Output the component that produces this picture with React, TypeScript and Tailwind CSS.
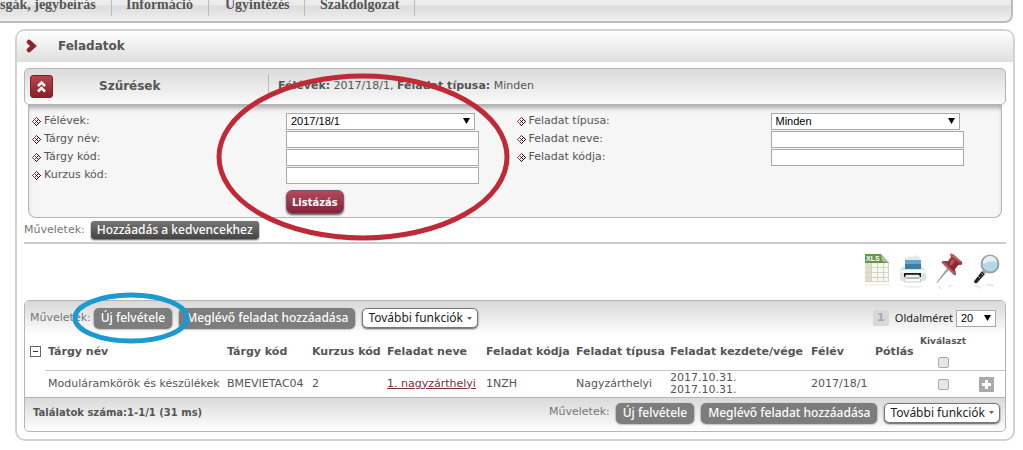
import React, { useState } from 'react';

const NAV_ITEMS = [
  { label: 'sgák, jegybeírás', width: 'w-[112px]' },
  { label: 'Információ', width: 'w-[97px] pl-[14px]' },
  { label: 'Ügyintézés', width: 'w-[96px] pl-[16px]' },
  { label: 'Szakdolgozat', width: 'w-[110px] pl-[15px]' },
];

const TASKS = [
  {
    id: 'task-1',
    subject: 'Moduláramkörök és készülékek',
    code: 'BMEVIETAC04',
    course: '2',
    name: '1. nagyzárthelyi',
    taskCode: '1NZH',
    type: 'Nagyzárthelyi',
    start: '2017.10.31.',
    end: '2017.10.31.',
    term: '2017/18/1',
  },
];

function BulletIcon() {
  return (
    <svg width="9" height="9" viewBox="0 0 9 9" className="shrink-0" aria-hidden="true" shapeRendering="crispEdges">
      <path d="M4 0h1v1h-1zM3 1h1v1h-1zM2 2h1v1h-1zM1 3h1v1h-1zM3 3h1v1h-1zM0 4h1v1h-1zM1 5h1v1h-1zM3 5h1v1h-1zM2 6h1v1h-1z" fill="#7c4650" />
      <path d="M5 1h1v1h-1zM6 2h1v1h-1zM5 3h1v1h-1zM7 3h1v1h-1zM4 4h1v1h-1zM8 4h1v1h-1zM5 5h1v1h-1zM7 5h1v1h-1zM6 6h1v1h-1zM3 7h1v1h-1zM5 7h1v1h-1zM4 8h1v1h-1z" fill="#3d0612" />
      <path d="M4 2h1v1h-1zM2 4h1v1h-1zM6 4h1v1h-1zM4 6h1v1h-1z" fill="#fff" />
    </svg>
  );
}

function XlsIcon() {
  return (
    <svg width="26" height="38" viewBox="0 0 26 38" aria-hidden="true">
      <path d="M1 1h17l7 9v19H1z" fill="#f9f9f4" />
      <path d="M1 10h6v19H1z" fill="#e3dfc6" />
      <path d="M1 14.500h24M1 19.500h24M1 24.500h24M7.500 10v19M13.500 10v19M19.500 10v19M24.500 10v19M1 28.500h24" stroke="#d3d3c6" fill="none" />
      <path d="M1 1h16l8 9H1z" fill="#67964f" />
      <path d="M17 1l1 7 7 2z" fill="#a9c79a" />
      <text x="2" y="8" fontSize="7" fontWeight="bold" fontFamily="Liberation Sans, sans-serif" fill="#fff">XLS</text>
      <path d="M1 31h24v2H1z" fill="#f4f4ec" />
    </svg>
  );
}

function PrinterIcon() {
  return (
    <svg width="28" height="38" viewBox="0 0 28 38" aria-hidden="true">
      <path d="M6 4l3 1 1-2 4 1 2-2 4 2 2 3v7H6z" fill="#dceaf1" />
      <path d="M6 7h16v9H6z" fill="#3b7fa6" />
      <path d="M6 7h16v4H6z" fill="#6aa6c5" />
      <path d="M3 14h3v2h16v-2h2l3 4v8q0 2-2 2H3q-2 0-2-2v-8z" fill="#dfe3e6" />
      <path d="M2 17h25v3H2z" fill="#f6f7f8" />
      <path d="M5 20h17v4H5z" fill="#17191b" />
      <path d="M7 22h13l2 7H5z" fill="#fbfbfb" stroke="#b8bcbf" strokeWidth=".7" />
      <path d="M7 25h13" stroke="#777" />
      <path d="M3 32q11 2 22 0l-2 2q-9 2-18 0z" fill="#efefef" />
    </svg>
  );
}

function PinIcon() {
  return (
    <svg width="28" height="38" viewBox="0 0 28 38" aria-hidden="true">
      <path d="M0 30L11 15l2 2z" fill="#b3b7ba" />
      <path d="M1 30L12 16" stroke="#85898c" strokeWidth=".8" />
      <path d="M14 1q2-1 4 1l8 7q1 2-1 3l-3 0-3 4 1 5q0 2-2 1L6 10q-1-2 1-2l5 0 3-4z" fill="#9c3a40" />
      <path d="M14 1q2-1 4 1l8 7-2 0-9-6zM6 9q1-1 2 0l12 12-2 1z" fill="#b96266" />
      <path d="M16 5l7 6-4 5-3 1-4-5 0-3z" fill="#8a2a31" />
      <path d="M16 6l3 2-4 5-2-2z" fill="#b4565b" />
      <path d="M2 33l4 3M12 34l5-2" stroke="#ededed" strokeWidth="2" />
    </svg>
  );
}

function SearchIcon() {
  return (
    <svg width="28" height="38" viewBox="0 0 28 38" aria-hidden="true">
      <path d="M9 18l3 3-8 9q-2 1-3-1 0-1 1-2z" fill="#242424" />
      <path d="M8 20l2 2M5 23l2 2" stroke="#9a9a9a" />
      <path d="M9 18l2-2 3 3-2 2z" fill="#a8aaac" />
      <circle cx="17" cy="11" r="8.500" fill="#b5d8e8" stroke="#9ba3a7" strokeWidth="2" />
      <path d="M10 11a7 7 0 0 1 14-2q-6-2-14 2z" fill="#e3f1f7" />
      <path d="M2 32l6 3M13 32q4-1 8 1" stroke="#ebebeb" strokeWidth="2" fill="none" />
    </svg>
  );
}

function SelectBox({ id, label, value, className }: { id: string; label?: string; value: string; className: string }) {
  return (
    <div className={`relative ${className}`}>
      <select
        id={id}
        aria-label={label}
        className="block h-[17px] w-full appearance-none border border-[#a9a9a9] bg-white pl-1 font-['Liberation_Sans',sans-serif] text-[11px] leading-[15px] text-black"
      >
        <option>{value}</option>
      </select>
      <svg width="7" height="6" viewBox="0 0 7 6" className="pointer-events-none absolute top-[5px] right-[5px]" aria-hidden="true">
        <path d="M0 0h7L3.500 6z" fill="#000" />
      </svg>
    </div>
  );
}

function FilterRow({ id, label, option }: { id: string; label: string; option?: string }) {
  return (
    <div className="flex h-[18px] items-center">
      <label htmlFor={id} className="flex w-[254px] items-center gap-[3px]">
        <BulletIcon />
        {label}
      </label>
      {option ? (
        <SelectBox id={id} value={option} className="w-[189px]" />
      ) : (
        <input id={id} type="text" className="h-[17px] w-[193px] border border-[#a9a9a9] bg-white px-1" />
      )}
    </div>
  );
}

function OperationButtons() {
  const grey =
    "h-5 rounded-[5px] bg-[#7d7d7d] px-[7px] font-['Noto_Sans',sans-serif] text-[12px] leading-[18px] font-medium text-white shadow-[0_1px_2px_#555]";
  return (
    <div className="flex gap-[7px]">
      <button type="button" className={grey}>Új felvétele</button>
      <button type="button" className={grey}>Meglévő feladat hozzáadása</button>
      <button
        type="button"
        className="flex h-5 items-center gap-1 rounded-[5px] border border-[#777] bg-white px-[5px] font-['Noto_Sans',sans-serif] text-[12px] leading-[18px] text-[#222] shadow-[0_1px_2px_#555]"
      >
        További funkciók
        <svg width="5" height="3" viewBox="0 0 5 3" aria-hidden="true">
          <path d="M0 0h5L2.500 3z" fill="#666" />
        </svg>
      </button>
    </div>
  );
}

export default function App() {
  const [selected, setSelected] = useState<string[]>([]);

  const toggleTask = (id: string) => {
    setSelected(prev => (prev.includes(id) ? prev.filter(item => item !== id) : [...prev, id]));
  };

  const th = 'pl-[3px] text-left font-bold whitespace-nowrap border-b border-[#c4c4c4]';
  const td = 'pl-[3px] whitespace-nowrap';

  return (
    <div className="min-h-screen bg-white font-['DejaVu_Sans',sans-serif] text-[11px] text-[#555]">
      <nav className="mr-[10px] flex h-[23px] rounded-br-[8px] border-r-2 border-b-2 border-[#bcbcbc] bg-linear-to-b from-[#ececec] from-20% via-[#dcdcdc] via-30% to-[#f0f0f0] font-['Liberation_Serif',serif] text-[14px] leading-[10px] font-bold text-[#555]">
        {NAV_ITEMS.map(item => (
          <a key={item.label} href="#" className={`h-4 border-r border-[#bbb] whitespace-nowrap ${item.width}`}>
            {item.label}
          </a>
        ))}
      </nav>

      <main className="mt-[6px] mr-[8px] ml-[15px] rounded-[10px] border-2 border-[#d2d2d2] pb-[7px]">
        <div className="flex h-[31px] items-center rounded-t-[8px] bg-linear-to-b from-white to-[#dedede] pb-px pl-[9px]">
          <svg width="12" height="14" viewBox="0 0 12 14" aria-hidden="true">
            <path d="M3 3l4.500 4-4.500 4" fill="none" stroke="#8e2630" strokeWidth="4.500" strokeLinecap="round" />
          </svg>
          <h1 className="ml-5 text-[12px] font-bold">Feladatok</h1>
        </div>

        <div className="relative mx-[7px] mt-[6px]">
          <div className="flex h-[37px] items-center rounded-[5px] border border-[#b5b5b5] bg-linear-to-b from-[#dadada] to-[#fafafa] pb-px pl-[5px]">
            <button type="button" aria-label="Szűrések" className="flex h-[23px] w-[23px] items-center justify-center rounded-[3px] border border-[#7c1f29] bg-linear-to-b from-[#b8434a] to-[#8a1f2a]">
              <svg width="11" height="13" viewBox="0 0 11 13" aria-hidden="true">
                <path d="M2 6l3.500-3.500L9 6M2 11.500L5.500 8 9 11.500" fill="none" stroke="#fff" strokeWidth="2.500" />
              </svg>
            </button>
            <h2 className="ml-[46px] w-[169px] text-[12px] font-bold">Szűrések</h2>
            <p className="border-l border-[#bbb] py-1 pl-[9px] text-[11px]">
              <b>Félévek:</b> 2017/18/1, <b>Feladat típusa:</b> Minden
            </p>
          </div>

          <form className="mx-1 h-[113px] rounded-b-[8px] border border-t-0 border-[#b5b5b5] bg-[#f6f6f6] pt-[7px] pl-[3px] shadow-[inset_0_5px_5px_-2px_#aaa]">
            <div className="grid grid-cols-2">
              <div>
                <FilterRow id="term" label="Félévek:" option="2017/18/1" />
                <FilterRow id="subject-name" label="Tárgy név:" />
                <FilterRow id="subject-code" label="Tárgy kód:" />
                <FilterRow id="course-code" label="Kurzus kód:" />
              </div>
              <div>
                <FilterRow id="task-type" label="Feladat típusa:" option="Minden" />
                <FilterRow id="task-name" label="Feladat neve:" />
                <FilterRow id="task-code" label="Feladat kódja:" />
              </div>
            </div>
            <button
              type="button"
              className="mt-[6px] ml-[254px] h-6 rounded-[6px] border border-[#6d5a70] bg-linear-to-b from-[#b5485c] to-[#86203a] px-[5px] text-[10px] font-bold text-white shadow-[0_1px_2px_#555]"
            >
              Listázás
            </button>
          </form>

          <svg className="pointer-events-none absolute top-[4px] left-[191px]" width="296" height="170" viewBox="0 0 296 170" aria-hidden="true">
            <ellipse cx="148" cy="85" rx="144" ry="81" fill="none" stroke="#bf2a36" strokeWidth="5" />
          </svg>
        </div>

        <div className="mx-[7px] flex h-[26px] items-center border-b-2 border-[#ccc] text-[#777]">
          Műveletek:
          <button
            type="button"
            className="ml-[6px] h-[18px] rounded-[3px] bg-linear-to-b from-[#777] to-[#444] px-[6px] font-['Noto_Sans',sans-serif] text-[12px] leading-4 font-medium text-white shadow-[0_1px_2px_#555]"
          >
            Hozzáadás a kedvencekhez
          </button>
        </div>

        <div className="mx-[7px] flex h-[56px] items-center justify-end gap-[9px] pr-[5px]">
          <button type="button" aria-label="XLS"><XlsIcon /></button>
          <button type="button" aria-label="Nyomtatás"><PrinterIcon /></button>
          <button type="button" aria-label="Rögzítés"><PinIcon /></button>
          <button type="button" aria-label="Keresés"><SearchIcon /></button>
        </div>

        <section className="relative mx-[7px] rounded-[5px] border border-[#b5b5b5]">
          <div className="flex h-[34px] items-center rounded-t-[5px] bg-linear-to-b from-[#d8d8d8] to-white pl-[5px] text-[#777]">
            <span className="mr-[3px]">Műveletek:</span>
            <OperationButtons />
            <span className="mr-[6px] ml-auto flex h-4 w-4 items-center justify-center rounded-[2px] bg-[#d8d8d8] font-bold text-[#aaa]">1</span>
            <label htmlFor="page-size" className="mr-[3px] font-['Noto_Sans',sans-serif] text-[11px] text-[#222]">Oldalméret</label>
            <SelectBox id="page-size" value="20" className="mr-[9px] w-10" />
          </div>

          <table className="w-full table-fixed border-separate border-spacing-0">
            <colgroup>
              <col className="w-[20px]" />
              <col />
              <col className="w-[85px]" />
              <col className="w-[75px]" />
              <col className="w-[99px]" />
              <col className="w-[90px]" />
              <col className="w-[94px]" />
              <col className="w-[141px]" />
              <col className="w-[64px]" />
              <col className="w-[47px]" />
              <col className="w-[48px]" />
              <col className="w-[38px]" />
            </colgroup>
            <thead>
              <tr className="h-9">
                <th className="pb-1 pl-[5px]">
                  <button type="button" aria-label="Összecsukás" className="flex h-[11px] w-[11px] items-center justify-center border border-[#666] bg-white">
                    <span className="h-px w-[5px] bg-[#333]" />
                  </button>
                </th>
                <th className={th}>Tárgy név</th>
                <th className={th}>Tárgy kód</th>
                <th className={th}>Kurzus kód</th>
                <th className={th}>Feladat neve</th>
                <th className={th}>Feladat kódja</th>
                <th className={th}>Feladat típusa</th>
                <th className={th}>Feladat kezdete/vége</th>
                <th className={th}>Félév</th>
                <th className={th}>Pótlás</th>
                <th className="border-b border-[#c4c4c4] pb-px text-center text-[9px] font-bold">
                  <label className="flex flex-col items-center gap-[10px] leading-[11px]">
                    Kiválaszt
                    <input
                      type="checkbox"
                      checked={selected.length === TASKS.length}
                      onChange={() => setSelected(selected.length ? [] : TASKS.map(task => task.id))}
                      className="h-[11px] w-[11px] appearance-none rounded-[2px] border border-[#aaa] bg-[#e6e6e6] checked:bg-[#888]"
                    />
                  </label>
                </th>
                <th className="border-b border-[#c4c4c4]" />
              </tr>
            </thead>
            <tbody>
              {TASKS.map(task => (
                <tr key={task.id} className="h-[26px]">
                  <td />
                  <td className={td}>{task.subject}</td>
                  <td className={td}>{task.code}</td>
                  <td className={td}>{task.course}</td>
                  <td className={td}>
                    <a href="#" className="text-[#7a3038] underline">{task.name}</a>
                  </td>
                  <td className={td}>{task.taskCode}</td>
                  <td className={td}>{task.type}</td>
                  <td className="pl-[3px] leading-3">{task.start}<br />{task.end}</td>
                  <td className={td}>{task.term}</td>
                  <td />
                  <td>
                    <input
                      type="checkbox"
                      aria-label={task.name}
                      checked={selected.includes(task.id)}
                      onChange={() => toggleTask(task.id)}
                      className="mx-auto block h-[11px] w-[11px] appearance-none rounded-[2px] border border-[#aaa] bg-[#e6e6e6] checked:bg-[#888]"
                    />
                  </td>
                  <td>
                    <button type="button" aria-label="Lehetőségek" className="mx-auto flex h-[15px] w-[15px] items-center justify-center bg-[#aaa]">
                      <svg width="9" height="9" viewBox="0 0 9 9" aria-hidden="true">
                        <path d="M4.500 0v9M0 4.500h9" stroke="#fff" strokeWidth="3" />
                      </svg>
                    </button>
                  </td>
                </tr>
              ))}
            </tbody>
          </table>

          <div className="flex h-[34px] items-center rounded-b-[5px] border-t border-[#b5b5b5] bg-linear-to-b from-[#dadada] to-white pr-[5px] pb-1 pl-2">
            <span className="text-[10px] font-bold">Találatok száma:1-1/1 (31 ms)</span>
            <span className="mr-[6px] ml-auto text-[#777]">Műveletek:</span>
            <OperationButtons />
          </div>

          <svg className="pointer-events-none absolute -top-[10px] left-[46px]" width="120" height="54" viewBox="0 0 120 54" aria-hidden="true">
            <ellipse cx="60" cy="27" rx="56" ry="23" fill="none" stroke="#1b9ad2" strokeWidth="5" />
          </svg>
        </section>
      </main>
    </div>
  );
}
